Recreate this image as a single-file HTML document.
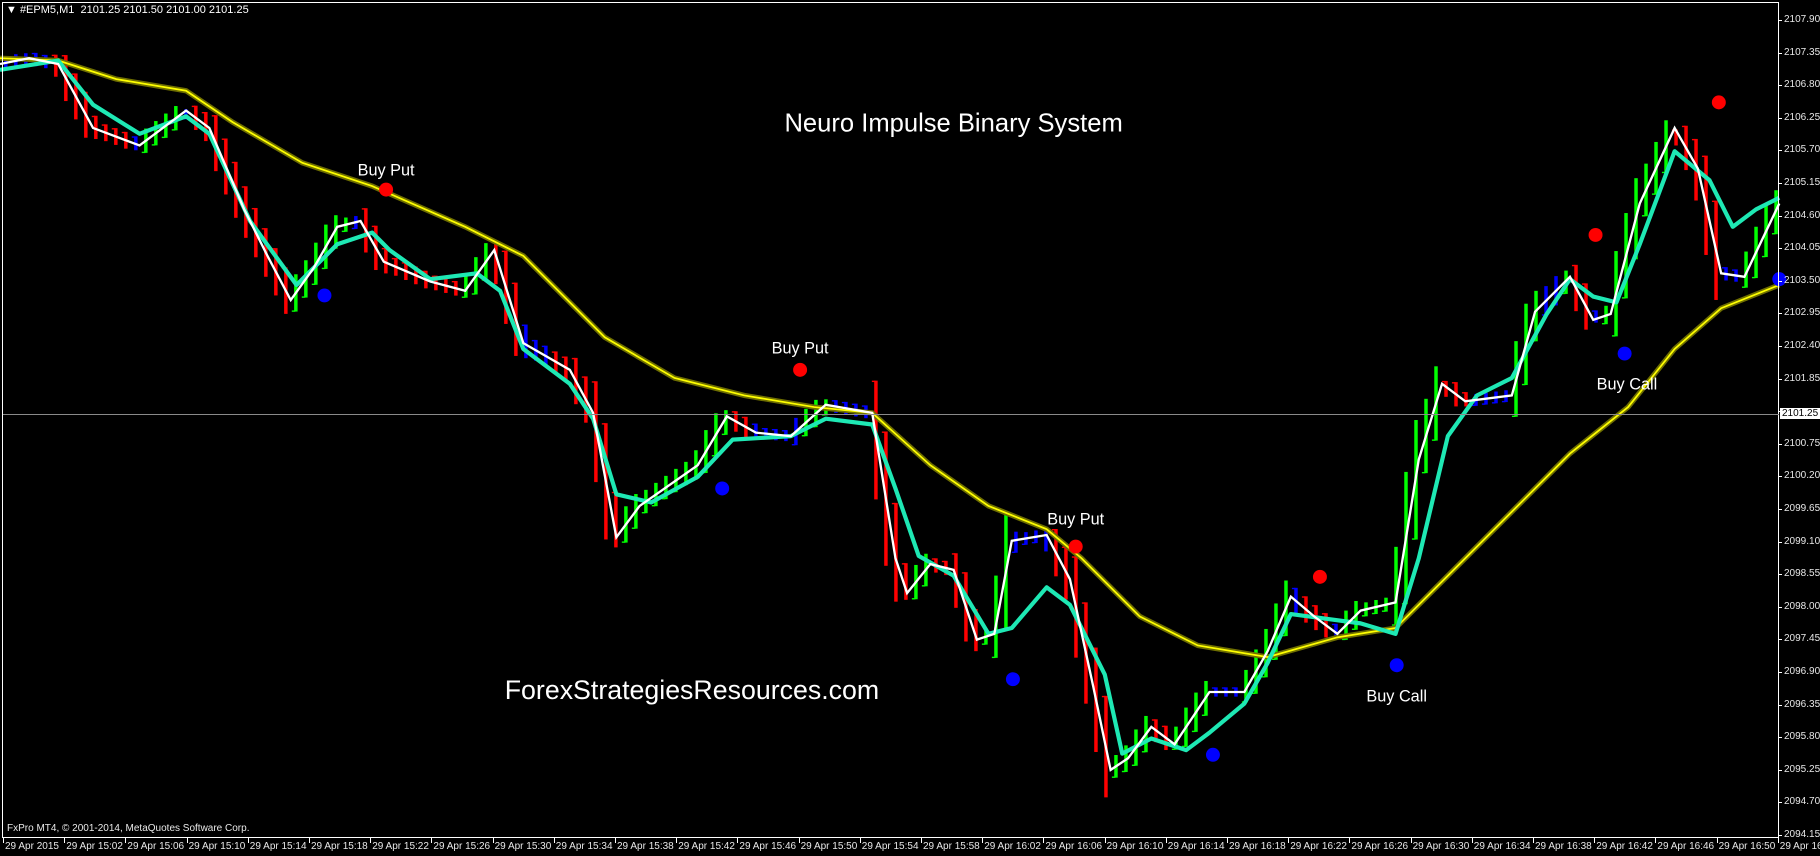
<!DOCTYPE html>
<html><head><meta charset="utf-8"><style>
body{margin:0;width:1820px;height:856px;background:#000;overflow:hidden;position:relative;font-family:"Liberation Sans",sans-serif;}
#frame{position:absolute;left:2px;top:2px;width:1777px;height:836px;border:1px solid #fff;box-sizing:border-box;}
.lab{position:absolute;color:#e8e8e8;font-size:11px;white-space:nowrap;}
svg{position:absolute;left:0;top:0}
</style></head><body>
<svg id="s" width="1820" height="856" viewBox="0 0 1565 736"></svg>
<div id="frame"></div>
<div class="lab" style="left:6px;top:4px;color:#fff">&#9660; #EPM5,M1&nbsp; 2101.25 2101.50 2101.00 2101.25</div>
<div class="lab" style="left:7px;top:823px;font-size:10px">FxPro MT4, © 2001-2014, MetaQuotes Software Corp.</div>
<div id="ax"></div>
<script>
var ax=document.getElementById('ax'),h='';
for(var i=0;i<26;i++){var yy=20+i*32.6;var v=(2107.90-i*0.55).toFixed(2);
h+='<div style="position:absolute;left:1778px;top:'+yy+'px;width:4px;height:1px;background:#fff"></div>';
if(i!=12)h+='<div class="lab" style="left:1784px;top:'+(yy-6)+'px;font-size:10px">'+v+'</div>';}
h+='<div style="position:absolute;left:3px;top:414px;width:1776px;height:1px;background:#8a8a8a"></div>';
h+='<div class="lab" style="left:1780px;top:408px;background:#fff;color:#000;padding:0 2px;font-size:10px">2101.25</div>';
for(var j=0;j<30;j++){var xx=3+j*61.2;var t;
if(j==0)t='29 Apr 2015';else{var m=2+(j-1)*4;var hh=15+Math.floor(m/60);var mm=m%60;t='29 Apr '+hh+':'+(mm<10?'0':'')+mm;}
h+='<div style="position:absolute;left:'+xx+'px;top:838px;width:1px;height:5px;background:#fff"></div>';
h+='<div class="lab" style="left:'+(xx+2)+'px;top:841px;font-size:10px">'+t+'</div>';}
ax.innerHTML=h;
var yel=[[0,50],[50,52],[100,68],[160,78],[200,105],[260,140],[320,160],[400,195],[450,220],[520,290],[580,325],[640,340],[700,350],[750,355],[800,400],[850,435],[900,455],[930,480],[980,530],[1030,555],[1090,565],[1150,548],[1200,540],[1230,510],[1290,450],[1350,390],[1400,350],[1440,300],[1480,265],[1530,245]];
var cy=[[0,60],[50,52],[80,90],[120,115],[160,100],[180,115],[215,190],[255,245],[290,210],[320,200],[335,215],[370,240],[410,235],[430,250],[450,300],[490,330],[510,360],[530,425],[560,432],[600,410],[630,378],[680,375],[710,360],[750,365],[770,420],[790,478],[820,495],[850,545],[870,540],[900,505],[920,520],[950,580],[965,648],[990,635],[1020,645],[1040,630],[1070,605],[1090,570],[1110,528],[1140,532],[1170,536],[1200,545],[1220,480],[1245,375],[1270,340],[1300,325],[1330,270],[1350,240],[1370,255],[1390,260],[1410,210],[1440,130],[1470,155],[1490,195],[1510,180],[1530,170]];
var wh=[[0,55],[25,50],[50,55],[80,110],[120,125],[160,95],[180,110],[210,180],[230,220],[250,258],[270,230],[290,195],[310,190],[330,225],[370,242],[400,250],[425,215],[450,295],[490,318],[510,355],[530,462],[550,435],[600,400],[625,358],[650,372],[680,375],[710,348],[750,355],[770,480],[780,510],[800,485],[820,490],[840,550],[855,545],[870,465],[900,460],[920,498],[940,590],[955,662],[970,652],[990,625],[1010,640],[1040,595],[1070,595],[1090,560],[1110,513],[1130,530],[1150,545],[1170,525],[1200,518],[1220,395],[1240,330],[1260,345],[1300,340],[1320,268],[1350,238],[1370,275],[1385,270],[1410,175],[1440,110],[1460,145],[1480,235],[1500,238],[1530,175]];
function pts(a){return a.map(function(q){return q.join(',')}).join(' ')}
function iy(a,x){for(var k=0;k<a.length-1;k++){if(x>=a[k][0]&&x<=a[k+1][0]){var f=(x-a[k][0])/(a[k+1][0]-a[k][0]);return a[k][1]+f*(a[k+1][1]-a[k][1]);}}return a[a.length-1][1];}
var s='';
for(var bx=5;bx<1532;bx+=8.6){var y0=iy(wh,bx-4.3),y1=iy(wh,bx+4.3);var d=y1-y0;
var c=d<-2?'#00ff00':(d>2?'#ff0000':'#0000ff');if(((bx*7)|0)%5==0&&Math.abs(d)<12)c='#0000ff';
var bt=Math.min(y0,y1)-4-Math.abs(d)*0.5,bb=Math.max(y0,y1)+4+Math.abs(d)*0.5;
s+='<rect x="'+(bx-1.5)+'" y="'+bt+'" width="3" height="'+(bb-bt)+'" fill="'+c+'"/>';
s+='<rect x="'+(bx-3.5)+'" y="'+(d<0?bb-1:bt)+'" width="3" height="1.2" fill="'+c+'"/>';}
s+='<polyline points="'+pts(yel)+'" fill="none" stroke="#6e6e00" stroke-width="4.5"/>';
s+='<polyline points="'+pts(yel)+'" fill="none" stroke="#ffff00" stroke-width="1.5"/>';
s+='<polyline points="'+pts(cy)+'" fill="none" stroke="#1ee8b4" stroke-width="3.6" stroke-linejoin="round"/>';
s+='<polyline points="'+pts(wh)+'" fill="none" stroke="#ffffff" stroke-width="2"/>';
[[332,163],[688,318],[925,470],[1135,496],[1372,202],[1478,88]].forEach(function(q){s+='<circle cx="'+q[0]+'" cy="'+q[1]+'" r="6" fill="#ff0000"/>'});
[[279,254],[621,420],[871,584],[1043,649],[1201,572],[1397,304],[1530,240]].forEach(function(q){s+='<circle cx="'+q[0]+'" cy="'+q[1]+'" r="6" fill="#0000ff"/>'});
var tf='font-family="Liberation Sans,sans-serif" fill="#fff"';
s+='<text x="820" y="113" font-size="22" text-anchor="middle" '+tf+'>Neuro Impulse Binary System</text>';
[[332,151,'Buy Put'],[688,304,'Buy Put'],[925,451,'Buy Put'],[1201,603,'Buy Call'],[1399,335,'Buy Call']].forEach(function(q){s+='<text x="'+q[0]+'" y="'+q[1]+'" font-size="14" text-anchor="middle" '+tf+'>'+q[2]+'</text>'});
s+='<text x="595" y="601" font-size="23" text-anchor="middle" '+tf+'>ForexStrategiesResources.com</text>';
document.getElementById('s').innerHTML=s;
</script>
</body></html>
